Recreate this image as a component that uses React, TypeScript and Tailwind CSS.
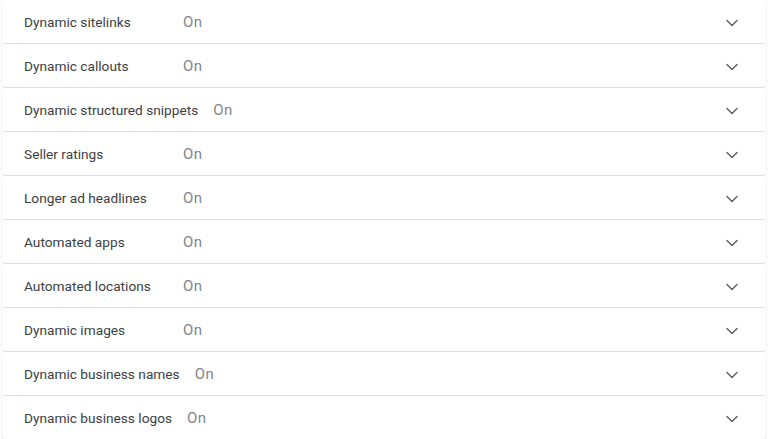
import { ChevronDown } from "lucide-react";

const rows = [
  "Dynamic sitelinks",
  "Dynamic callouts",
  "Dynamic structured snippets",
  "Seller ratings",
  "Longer ad headlines",
  "Automated apps",
  "Automated locations",
  "Dynamic images",
  "Dynamic business names",
  "Dynamic business logos",
];

export default function App() {
  return (
    <div
      className="w-[768px] h-[439px] bg-white overflow-hidden flex flex-col gap-px px-[2px]"
      style={{ fontFamily: "Roboto, 'Liberation Sans', sans-serif" }}
    >
      {rows.map((label) => (
        <div
          key={label}
          className="h-[43px] shrink-0 flex items-center pt-[2px] pl-[22px] pr-[24px] bg-white rounded-[3px] shadow-[0_0_0_1px_rgba(60,64,67,0.06),0_1px_1px_rgba(60,64,67,0.06)]"
        >
          <span className="min-w-[144px] mr-[15px] text-[13.7px] text-[#3c4043]">{label}</span>
          <span className="text-[15px] tracking-[0.4px] text-[#80868b]">On</span>
          <ChevronDown className="ml-auto w-5 h-5 text-[#5f6368]" strokeWidth={1.8} />
        </div>
      ))}
    </div>
  );
}
